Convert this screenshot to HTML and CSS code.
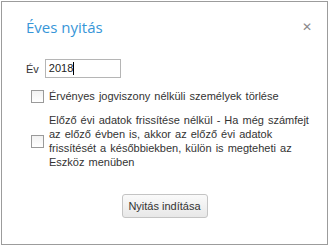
FILE: index.html
```html
<!DOCTYPE html>
<html lang="hu">

<head>
    <meta charset="UTF-8">
    <meta name="viewport" content="width=device-width, initial-scale=1.0">
    <title>Éves nyitás</title>
    <link rel="stylesheet" href="styles.css">
</head>

<body>

    <div class="dialog">
        <!-- Fejléc -->
        <div class="dialog-header">
            <h2 class="dialog-title">Éves nyitás</h2>
            <span class="dialog-close">&#x2715;</span>
        </div>

        <!-- Év -->
        <div class="year-row">
            <label for="ev">Év</label>
            <div class="year-input" id="ev">2018<span class="caret"></span></div>
        </div>

        <!-- Opciók -->
        <label class="option">
            <span class="box"></span>
            <span class="option-text">Érvényes jogviszony nélküli személyek törlése</span>
        </label>

        <label class="option option-multi">
            <span class="box"></span>
            <span class="option-text">Előző évi adatok frissítése nélkül - Ha még számfejt<br>az előző évben is, akkor az előző évi adatok<br>frissítését a későbbiekben, külön is megteheti az<br>Eszköz menüben</span>
        </label>

        <div class="actions">
            <button class="btn">Nyitás indítása</button>
        </div>
    </div>

</body>

</html>
```

FILE: styles.css
```css
body {
    margin: 0;
    background: #fff;
    font-family: "Liberation Sans", Arial, sans-serif;
    font-size: 11px;
    color: #333;
}

.dialog {
    box-sizing: border-box;
    width: 327px;
    height: 244px;
    margin: 1px;
    border: 1px solid #9c9c9c;
    padding: 14px 24px 0 24px;
}

.dialog-header {
    display: flex;
    justify-content: space-between;
    align-items: center;
}

.dialog-title {
    margin: 0;
    font-family: "Open Sans", sans-serif;
    font-weight: normal;
    font-size: 15px;
    line-height: 22px;
    color: #3796d8;
}

.dialog-close {
    font-size: 12px;
    color: #8a8a8a;
    margin-right: -9px;
}

.year-row {
    display: flex;
    align-items: center;
    gap: 6px;
    margin-top: 21px;
}

.year-input {
    box-sizing: border-box;
    width: 76px;
    height: 19px;
    border: 1px solid #b5b5b5;
    padding: 2px 3px;
    line-height: 13px;
    color: #222;
}

.caret {
    display: inline-block;
    width: 1px;
    height: 13px;
    background: #000;
    vertical-align: top;
}

.option {
    display: flex;
    align-items: center;
    gap: 5px;
    margin-top: 11px;
    padding-left: 5px;
}

.option-multi {
    margin-top: 10px;
}

.option-text {
    line-height: 14px;
    white-space: nowrap;
    word-spacing: 1px;
}

.box {
    box-sizing: border-box;
    width: 13px;
    height: 13px;
    border: 1px solid #9a9a9a;
    background: linear-gradient(#f2f2f2, #fff);
    flex: none;
}

.actions {
    display: flex;
    justify-content: center;
    margin-top: 25px;
}

.btn {
    box-sizing: border-box;
    width: 86px;
    height: 24px;
    border: 1px solid #c4c4c4;
    border-radius: 3px;
    background: linear-gradient(#fafafa, #e8e8e8);
    font-family: inherit;
    font-size: 11px;
    color: #333;
    padding: 0;
}
```
